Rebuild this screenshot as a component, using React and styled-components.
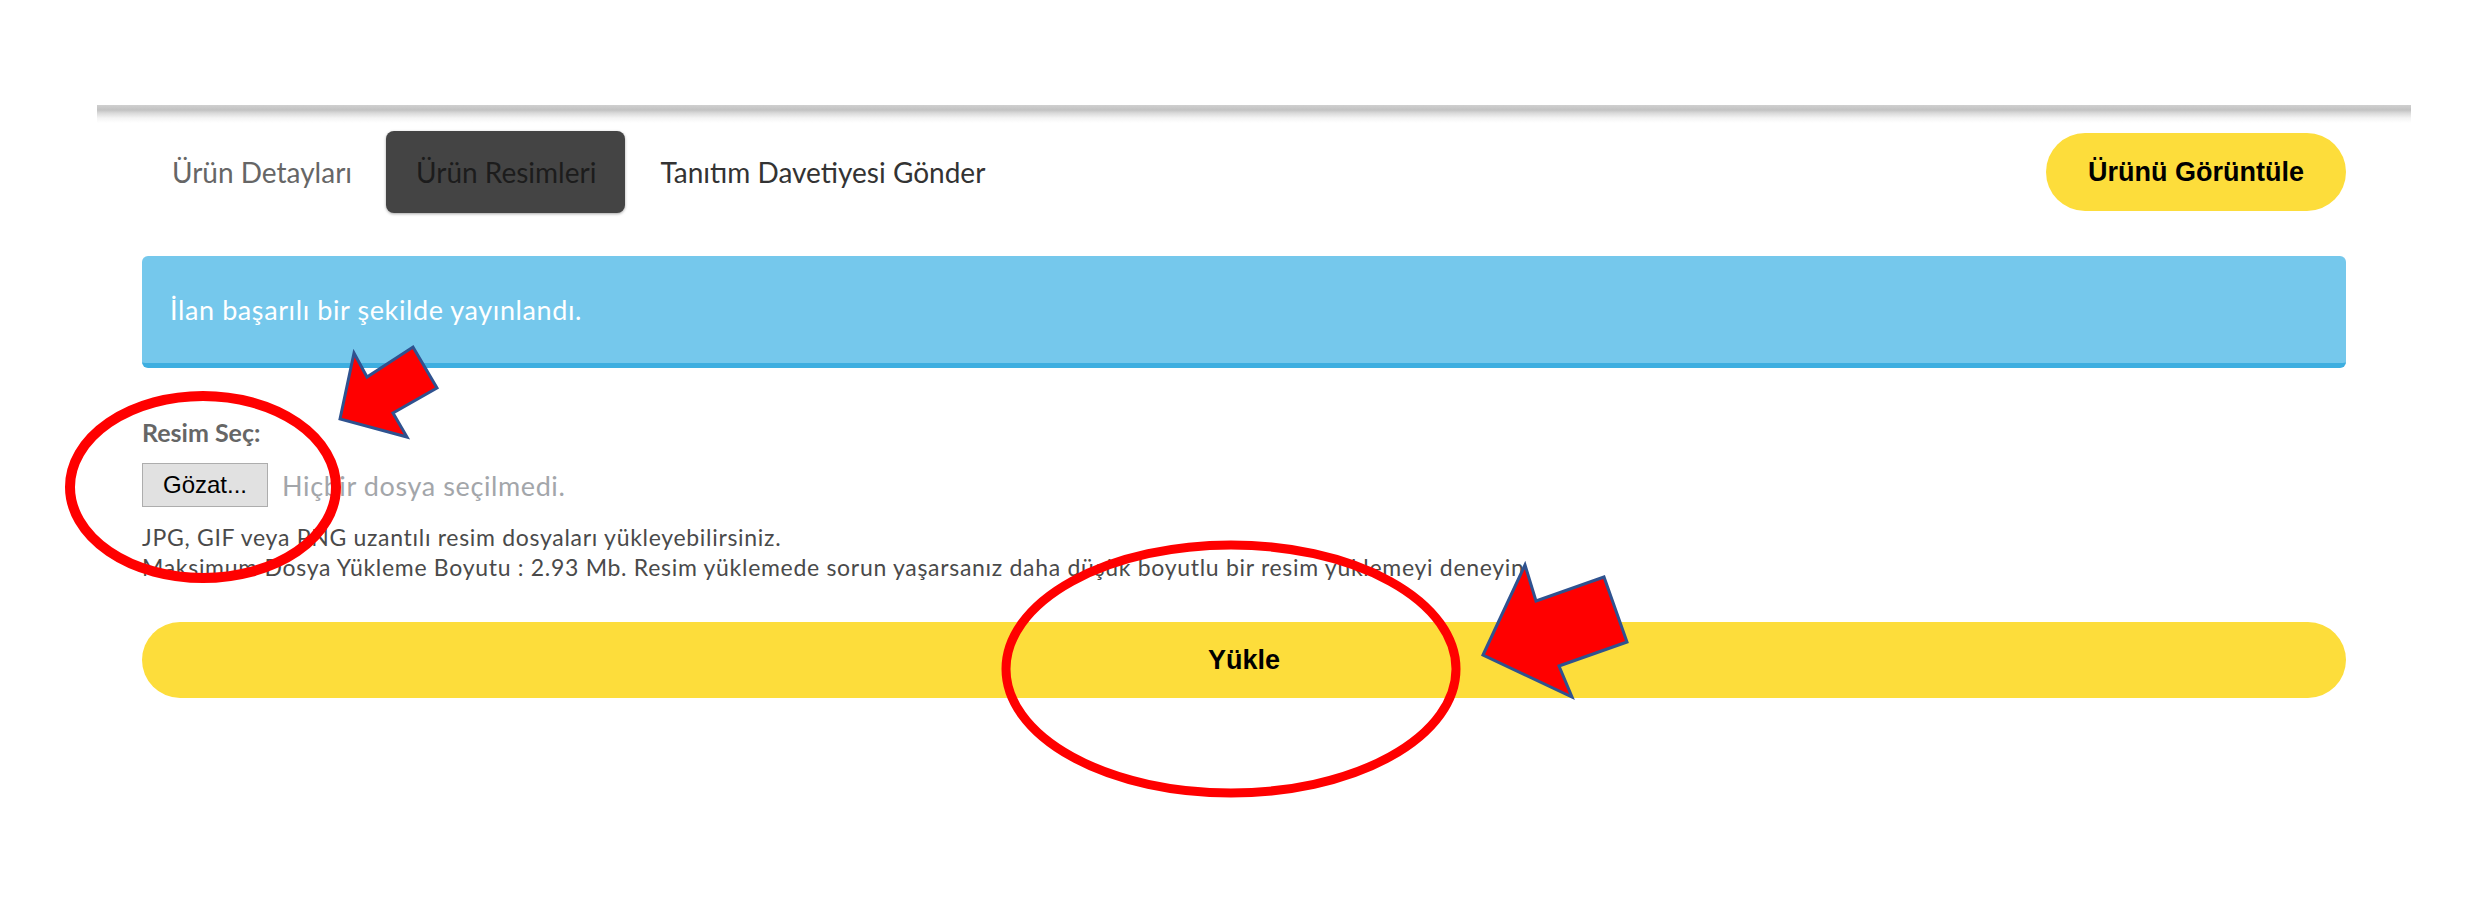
import React from "react";
import styled, { createGlobalStyle } from "styled-components";

const GlobalStyle = createGlobalStyle`
  html, body { margin: 0; padding: 0; background: #ffffff; }
  body { font-family: Lato, "Open Sans", sans-serif; }
  * { box-sizing: border-box; }
`;

const Page = styled.div`
  position: relative;
  width: 2479px;
  height: 909px;
  padding: 105px 0 0 97px;
  overflow: hidden;
`;

const Panel = styled.div`
  width: 2314px;
`;

const TopRule = styled.div`
  height: 18px;
  background: linear-gradient(to bottom, #cfcfcf 0px, #c2c2c2 5px, #d9d9d9 8px, #f4f4f4 13px, #ffffff 18px);
`;

const Content = styled.div`
  padding: 8px 65px 0 45px;
  display: flex;
  flex-direction: column;
`;

const NavRow = styled.div`
  display: flex;
  align-items: center;
  justify-content: space-between;
  height: 82px;
`;

const Tabs = styled.nav`
  display: flex;
  gap: 5px;
  height: 82px;
`;

const Tab = styled.a`
  display: flex;
  align-items: center;
  height: 82px;
  padding: 0 29px 0 30px;
  border-radius: 8px;
  font-family: Lato, sans-serif;
  font-size: 28px;
  text-decoration: none;
  color: ${(p) => (p.$active ? "#1c1c1c" : p.$muted ? "#666666" : "#333333")};
  background: ${(p) => (p.$active ? "#444444" : "transparent")};
  box-shadow: ${(p) => (p.$active ? "0 1px 3px rgba(0,0,0,0.35)" : "none")};
`;

const PillButton = styled.button`
  border: none;
  background: #fddd3b;
  color: #000;
  font-family: "Liberation Sans", Arial, sans-serif;
  font-weight: 700;
  font-size: 27px;
  height: ${(p) => (p.$wide ? "76px" : "78px")};
  width: ${(p) => (p.$wide ? "100%" : "auto")};
  padding: 0 42px;
  border-radius: 40px;
  cursor: pointer;
`;

const Alert = styled.div`
  margin-top: 43px;
  height: 112px;
  padding: 0 28px;
  display: flex;
  align-items: center;
  background: #75c8ec;
  border-bottom: 5px solid #3daee0;
  border-radius: 6px;
  color: #ffffff;
  font-family: Lato, sans-serif;
  font-size: 27px;
  letter-spacing: 0.6px;
`;

const FieldLabel = styled.label`
  margin-top: 49px;
  line-height: 30px;
  font-family: Lato, sans-serif;
  font-weight: 700;
  font-size: 25px;
  color: #666666;
`;

const FileRow = styled.div`
  margin-top: 16px;
  display: flex;
  align-items: center;
  gap: 14px;
  height: 44px;
`;

const BrowseButton = styled.button`
  height: 44px;
  padding: 0 20px;
  background: #e1e1e1;
  border: 1px solid #adadad;
  border-radius: 0;
  font-family: "Liberation Sans", Arial, sans-serif;
  font-size: 24px;
  color: #000;
`;

const FileName = styled.span`
  font-family: Lato, sans-serif;
  font-size: 27px;
  letter-spacing: 0.6px;
  color: #a3a6aa;
`;

const Hints = styled.div`
  margin-top: 15px;
  display: flex;
  flex-direction: column;
`;

const Hint = styled.p`
  margin: 0;
  line-height: 30px;
  font-family: Lato, sans-serif;
  font-size: 23px;
  letter-spacing: 0.7px;
  color: #4a4a4a;
  white-space: nowrap;
`;

const SubmitWrap = styled.div`
  margin-top: 40px;
  display: flex;
`;

const Overlay = styled.svg`
  position: absolute;
  left: 0;
  top: 0;
  pointer-events: none;
`;

export default function App() {
  return (
    <>
      <GlobalStyle />
      <Page>
        <Panel>
          <TopRule />
          <Content>
            <NavRow>
              <Tabs>
                <Tab $muted>Ürün Detayları</Tab>
                <Tab $active>Ürün Resimleri</Tab>
                <Tab>Tanıtım Davetiyesi Gönder</Tab>
              </Tabs>
              <PillButton>Ürünü Görüntüle</PillButton>
            </NavRow>
            <Alert>İlan başarılı bir şekilde yayınlandı.</Alert>
            <FieldLabel>Resim Seç:</FieldLabel>
            <FileRow>
              <BrowseButton>Gözat...</BrowseButton>
              <FileName>Hiçbir dosya seçilmedi.</FileName>
            </FileRow>
            <Hints>
              <Hint>JPG, GIF veya PNG uzantılı resim dosyaları yükleyebilirsiniz.</Hint>
              <Hint>
                Maksimum Dosya Yükleme Boyutu : 2.93 Mb. Resim yüklemede sorun yaşarsanız daha düşük boyutlu bir resim yüklemeyi deneyin.
              </Hint>
            </Hints>
            <SubmitWrap>
              <PillButton $wide>Yükle</PillButton>
            </SubmitWrap>
          </Content>
        </Panel>
        <Overlay width="2479" height="909" viewBox="0 0 2479 909">
          <ellipse cx="203" cy="487" rx="133" ry="91" fill="none" stroke="#ff0000" strokeWidth="10" />
          <ellipse cx="1231" cy="669" rx="225" ry="124" fill="none" stroke="#ff0000" strokeWidth="9" />
          <polygon
            points="340,419 354,353 367,377 413,347 437,388 393,413 407,437"
            fill="#ff0000"
            stroke="#2f528f"
            strokeWidth="3"
            strokeLinejoin="miter"
          />
          <polygon
            points="1483,655 1525,565 1536,601 1604,577 1627,642 1559,666 1572,697"
            fill="#ff0000"
            stroke="#2f528f"
            strokeWidth="3"
            strokeLinejoin="miter"
          />
        </Overlay>
      </Page>
    </>
  );
}
